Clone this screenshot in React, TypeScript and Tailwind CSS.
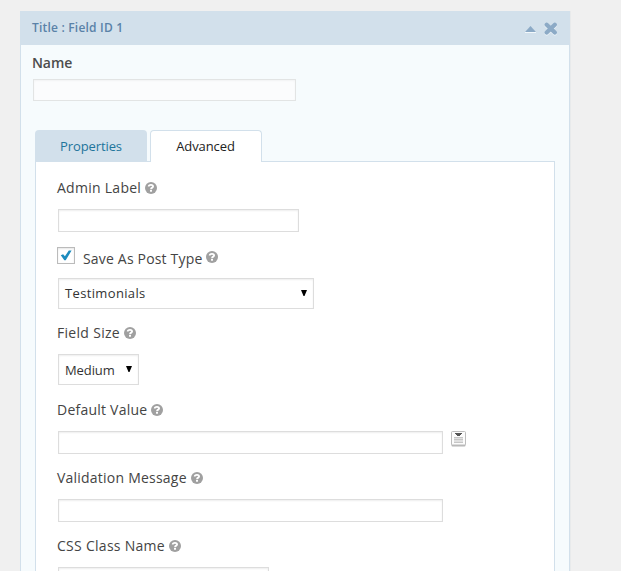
import type { ReactNode } from 'react'
import { clsx } from 'clsx'

function HelpIcon({ className }: { className?: string }) {
  return (
    <svg viewBox="0 0 12 12" className={clsx('h-3 w-3 shrink-0', className)}>
      <circle cx="6" cy="6" r="6" fill="#a0a0a0" />
      <path
        d="M3.700 4.600C3.700 3.300 4.800 2.900 6 2.900s2.100.6 2.100 1.600C8.100 5.700 6 5.600 6 7.200"
        fill="none"
        stroke="#fff"
        strokeWidth="1.800"
      />
      <rect x="5" y="8" width="2" height="1.700" fill="#fff" />
    </svg>
  )
}

function FieldLabel({ children, className }: { children: ReactNode; className?: string }) {
  return (
    <div className="flex h-5 items-center">
      <span className={clsx('text-sm leading-5 whitespace-nowrap text-[#444]', className)}>{children}</span>
      <HelpIcon className="ml-1" />
    </div>
  )
}

function TextInput({ className }: { className: string }) {
  return (
    <input
      type="text"
      className={clsx(
        'ml-px block border border-[#ddd] bg-white shadow-[inset_0_1px_2px_rgba(0,0,0,0.07)] outline-none',
        className
      )}
    />
  )
}

// Select box in its closed state
function SelectBox({ value, className, textClass }: { value: string; className: string; textClass: string }) {
  return (
    <button
      type="button"
      className={clsx(
        'ml-px flex h-[31px] items-center justify-between border border-[#ddd] bg-white pl-1.5 text-[13px] text-[#333] shadow-[inset_0_1px_2px_rgba(0,0,0,0.07)]',
        className
      )}
    >
      <span className={textClass}>{value}</span>
      <svg viewBox="0 0 6 6" className="mr-1.5 mb-0.5 h-1.5 w-1.5">
        <path d="M0 0h6L3.500 6h-1z" fill="#000" />
      </svg>
    </button>
  )
}

function MergeTagIcon() {
  return (
    <svg viewBox="0 0 15 16" className="ml-2 h-4 w-[15px]">
      <rect x="0.500" y="1" width="14" height="14.500" rx="1" fill="#b5b5b5" />
      <rect x="0.500" y="0.500" width="14" height="13.500" rx="1" fill="#fcfcfc" stroke="#bdbdbd" />
      <rect x="3" y="6" width="9" height="6" fill="#e0e0e0" />
      <path d="M4 2h7v1h-1v1H9v1H6V4H5V3H4z" fill="#555" />
      <path d="M3 6.500h9M3 8.500h9M3 11.500h9" stroke="#c6c6c6" />
    </svg>
  )
}

export default function App() {
  return (
    <div className="h-[571px] w-[621px] overflow-hidden bg-[#f0f0f0] pt-[11px] pl-5 font-['Open_Sans','Noto_Sans',sans-serif]">
      <div className="h-[600px] w-[550px] border border-[#d2e0eb] bg-[#f6fbfd] shadow-[1px_0_0_#e8eaeb]">
        <div className="flex h-[33px] items-center bg-[#d2e0eb] pr-[11px] pl-[11px]">
          <span className="mb-0.5 grow text-xs font-semibold tracking-[0.2px] text-[#5a82a8]">
            Title : Field ID 1
          </span>
          <svg viewBox="0 0 11 7" className="mt-px h-[7px] w-[11px]">
            <path d="M0 7h11v-1L5.500 1 0 6z" fill="#f3f8fb" />
            <path d="M0 6 5.500 0 11 6z" fill="#8caac6" />
          </svg>
          <svg viewBox="0 0 14 14" className="ml-2 h-3.5 w-3.5" fill="none" strokeWidth="4.200" strokeLinecap="round">
            <path d="M2.700 3.700l8.100 7.800M10.800 3.700l-8.100 7.800" stroke="#e9f1f7" />
            <path d="M2.700 2.700l8.100 7.800M10.800 2.700l-8.100 7.800" stroke="#8caac6" />
          </svg>
        </div>

        <div className="px-[11px] pt-2">
          <div className="text-sm leading-5 font-semibold tracking-[-0.1px] text-[#4c4c4c]">Name</div>
          <div className="mt-1.5 ml-px h-[22px] w-[263px] border border-[#e2e4e4] bg-[#fbfcfd] shadow-[inset_0_1px_2px_rgba(0,0,0,0.04)]" />
        </div>

        <div className="mt-[29px] ml-3.5 w-[520px]">
          <div className="relative z-10 -mb-px flex h-8 gap-[3px] text-[13px]">
            <div className="flex w-28 items-center justify-center rounded-t bg-[#d2e0eb] pt-px text-[#21759b]">
              <span className="tracking-[-0.1px]">Properties</span>
            </div>
            <div className="flex w-28 items-center justify-center rounded-t border border-b-0 border-[#d2e0eb] bg-white text-[#222]">
              <span className="-ml-px tracking-[-0.1px]">Advanced</span>
            </div>
          </div>

          <div className="h-[500px] border border-[#d2e0eb] bg-white pt-4 pl-[21px]">
            <FieldLabel className="tracking-[0.27px]">Admin Label</FieldLabel>
            <TextInput className="mt-[11px] h-[23px] w-[241px]" />

            <div className="mt-3.5 flex h-6 items-start">
              <div className="mt-px flex h-[17px] w-[18px] items-center justify-center border border-[#bbb] bg-white shadow-[inset_0_1px_2px_rgba(0,0,0,0.1)]">
                <svg viewBox="0 0 12 11" className="h-[11px] w-3">
                  <path d="M0.800 5.200 3.100 4.200 4.900 6.300 8.800.6 11.600.6 5.700 10.200 4.300 10.200z" fill="#1e8cbe" />
                </svg>
              </div>
              <span className="mt-[3px] ml-2 text-sm leading-5 tracking-[0.18px] whitespace-nowrap text-[#444]">
                Save As Post Type
              </span>
              <HelpIcon className="mt-[5px] ml-1" />
            </div>
            <SelectBox value="Testimonials" className="mt-2 w-64" textClass="tracking-[0.35px]" />

            <div className="mt-3.5">
              <FieldLabel className="tracking-[0.3px]">Field Size</FieldLabel>
            </div>
            <SelectBox value="Medium" className="mt-[11px] w-[81px]" textClass="mt-0.5 tracking-[-0.1px]" />

            <div className="mt-[15px]">
              <FieldLabel className="tracking-[0.23px]">Default Value</FieldLabel>
            </div>
            <div className="mt-[11px] flex">
              <TextInput className="h-[23px] w-[385px]" />
              <MergeTagIcon />
            </div>

            <div className="mt-3.5">
              <FieldLabel className="tracking-[0.22px]">Validation Message</FieldLabel>
            </div>
            <TextInput className="mt-[11px] h-[23px] w-[385px]" />

            <div className="mt-3.5">
              <FieldLabel className="tracking-[0.28px]">CSS Class Name</FieldLabel>
            </div>
            <TextInput className="mt-[11px] h-[23px] w-[211px]" />
          </div>
        </div>
      </div>
    </div>
  )
}
